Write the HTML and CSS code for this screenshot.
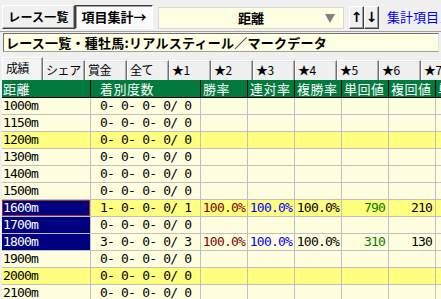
FILE: index.html
```html
<!DOCTYPE html>
<html lang="ja">
<head>
<meta charset="utf-8">
<link rel="stylesheet" href="styles.css">
</head>
<body>
<div class="app">
  <div class="toolbar">
    <div class="btn">レース一覧</div>
    <div class="btn pressed">項目集計→</div>
    <div class="select"><span class="sel-text">距離</span><span class="caret"></span></div>
    <div class="arrows"><div class="abtn">↑</div><div class="abtn">↓</div></div>
    <div class="link">集計項目メモ</div>
  </div>
  <div class="title">レース一覧・種牡馬:リアルスティール／マークデータ</div>
  <div class="tabs">
    <div class="tab active">成績</div>
    <div class="tab">シェア</div>
    <div class="tab">賞金</div>
    <div class="tab">全て</div>
    <div class="tab">★1</div>
    <div class="tab">★2</div>
    <div class="tab">★3</div>
    <div class="tab">★4</div>
    <div class="tab">★5</div>
    <div class="tab">★6</div>
    <div class="tab">★7</div>
  </div>
  <div class="grid">
    <div class="row head">
      <div class="c c1">距離</div>
      <div class="c c2">着別度数</div>
      <div class="c c3">勝率</div>
      <div class="c c3">連対率</div>
      <div class="c c3">複勝率</div>
      <div class="c c3">単回値</div>
      <div class="c c3">複回値</div>
      <div class="c c3">単勝率</div>
    </div>
    <div class="row"><div class="c c1">1000m</div><div class="c c2">0- 0- 0- 0/ 0</div><div class="c c3"></div><div class="c c3"></div><div class="c c3"></div><div class="c c3"></div><div class="c c3"></div><div class="c c3"></div></div>
    <div class="row"><div class="c c1">1150m</div><div class="c c2">0- 0- 0- 0/ 0</div><div class="c c3"></div><div class="c c3"></div><div class="c c3"></div><div class="c c3"></div><div class="c c3"></div><div class="c c3"></div></div>
    <div class="row hl"><div class="c c1">1200m</div><div class="c c2">0- 0- 0- 0/ 0</div><div class="c c3"></div><div class="c c3"></div><div class="c c3"></div><div class="c c3"></div><div class="c c3"></div><div class="c c3"></div></div>
    <div class="row"><div class="c c1">1300m</div><div class="c c2">0- 0- 0- 0/ 0</div><div class="c c3"></div><div class="c c3"></div><div class="c c3"></div><div class="c c3"></div><div class="c c3"></div><div class="c c3"></div></div>
    <div class="row"><div class="c c1">1400m</div><div class="c c2">0- 0- 0- 0/ 0</div><div class="c c3"></div><div class="c c3"></div><div class="c c3"></div><div class="c c3"></div><div class="c c3"></div><div class="c c3"></div></div>
    <div class="row"><div class="c c1">1500m</div><div class="c c2">0- 0- 0- 0/ 0</div><div class="c c3"></div><div class="c c3"></div><div class="c c3"></div><div class="c c3"></div><div class="c c3"></div><div class="c c3"></div></div>
    <div class="row hl"><div class="c c1 sel focus">1600m</div><div class="c c2">1- 0- 0- 0/ 1</div><div class="c c3 num red">100.0%</div><div class="c c3 num blue">100.0%</div><div class="c c3 num">100.0%</div><div class="c c3 num green pr">790</div><div class="c c3 num pr">210</div><div class="c c3"></div></div>
    <div class="row"><div class="c c1 sel">1700m</div><div class="c c2">0- 0- 0- 0/ 0</div><div class="c c3"></div><div class="c c3"></div><div class="c c3"></div><div class="c c3"></div><div class="c c3"></div><div class="c c3"></div></div>
    <div class="row"><div class="c c1 sel">1800m</div><div class="c c2">3- 0- 0- 0/ 3</div><div class="c c3 num red">100.0%</div><div class="c c3 num blue">100.0%</div><div class="c c3 num">100.0%</div><div class="c c3 num green pr">310</div><div class="c c3 num pr">130</div><div class="c c3"></div></div>
    <div class="row"><div class="c c1">1900m</div><div class="c c2">0- 0- 0- 0/ 0</div><div class="c c3"></div><div class="c c3"></div><div class="c c3"></div><div class="c c3"></div><div class="c c3"></div><div class="c c3"></div></div>
    <div class="row hl"><div class="c c1">2000m</div><div class="c c2">0- 0- 0- 0/ 0</div><div class="c c3"></div><div class="c c3"></div><div class="c c3"></div><div class="c c3"></div><div class="c c3"></div><div class="c c3"></div></div>
    <div class="row"><div class="c c1">2100m</div><div class="c c2">0- 0- 0- 0/ 0</div><div class="c c3"></div><div class="c c3"></div><div class="c c3"></div><div class="c c3"></div><div class="c c3"></div><div class="c c3"></div></div>
  </div>
</div>
</body>
</html>
```
FILE: styles.css
```css
* { box-sizing: border-box; }
html, body {
  margin: 0;
  padding: 0;
  width: 441px;
  height: 299px;
  overflow: hidden;
  background: #f0f0f0;
  font-family: "Noto Sans CJK JP", sans-serif;
  color: #000;
}
.app { width: 441px; white-space: nowrap; }

.toolbar {
  display: flex;
  align-items: flex-start;
  height: 32px;
  padding: 5px 0 0 2px;
  border-bottom: 1px solid #a0a0a0;
}
.toolbar > * { flex-shrink: 0; }
.btn {
  width: 73px;
  height: 24px;
  font-size: 12px;
  font-weight: bold;
  letter-spacing: 0.2px;
  line-height: 22px;
  text-align: center;
  background: #f0f0f0;
  border: 1px solid;
  border-color: #ffffff #404040 #404040 #ffffff;
  box-shadow: inset -1px -1px 0 #a0a0a0;
}
.btn.pressed {
  width: 78px;
  font-size: 13px;
  letter-spacing: 0;
  background: #fbfbfb;
  border-color: #404040 #ffffff #ffffff #404040;
  box-shadow: inset 1px 1px 0 #a0a0a0;
}
.select {
  margin: 2px 0 0 5px;
  width: 186px;
  height: 22px;
  background: #ffffe4;
  border: 1px solid #d8d8d0;
  display: flex;
  align-items: center;
  justify-content: center;
  position: relative;
}
.sel-text {
  font-size: 13px;
  font-weight: bold;
  line-height: 20px;
}
.caret {
  position: absolute;
  right: 8px;
  top: 6px;
  width: 0;
  height: 0;
  border-left: 5px solid transparent;
  border-right: 5px solid transparent;
  border-top: 9px solid #808080;
}
.arrows { display: flex; margin: 1px 0 0 5px; }
.abtn {
  width: 15px;
  height: 23px;
  font-family: "DejaVu Sans", sans-serif;
  font-size: 14px;
  font-weight: bold;
  line-height: 20px;
  text-align: center;
  background: #f0f0f0;
  border: 1px solid;
  border-color: #ffffff #404040 #404040 #ffffff;
  box-shadow: inset -1px -1px 0 #a0a0a0;
}
.link {
  margin: 3px 0 0 8px;
  font-size: 13px;
  line-height: 18px;
  color: #0000ff;
}

.title {
  margin: 1px 2px 0 3px;
  height: 19px;
  background: #ffffe4;
  border: 1px solid;
  border-color: #707070 #e0e0e0 #a0a0a0 #707070;
  font-size: 13px;
  font-weight: bold;
  letter-spacing: 0.25px;
  line-height: 17px;
  padding-left: 2px;
}

.tabs {
  display: flex;
  align-items: flex-end;
  margin-top: 5px;
  height: 23px;
  padding-left: 2px;
}
.tab {
  flex: 0 0 42px;
  height: 20px;
  font-size: 12px;
  letter-spacing: -0.4px;
  line-height: 18px;
  padding-left: 2px;
  overflow: hidden;
  background: #f0f0f0;
  border-top: 1px solid #ffffff;
  border-left: 1px solid #ffffff;
  border-right: 1px solid #707070;
  box-shadow: inset -1px 0 0 #b0b0b0, inset 0 1px 0 #e8e8e8;
}
.tab.active {
  flex-basis: 41px;
  height: 23px;
  line-height: 20px;
  padding-left: 3px;
  background: #f4f4f4;
}

.grid { margin-left: 2px; }
.row { display: flex; height: 17px; background: #ffffe0; }
.row.hl { background: #ffff80; }
.c {
  flex: 0 0 auto;
  height: 17px;
  border-right: 1px solid #c0c0c0;
  border-bottom: 1px solid #c0c0c0;
  font-family: "DejaVu Sans Mono", monospace;
  font-size: 13px;
  letter-spacing: -0.8px;
  line-height: 16px;
  white-space: pre;
  overflow: hidden;
}
.c1 { width: 89px; padding-left: 1px; }
.c2 { width: 110px; padding-left: 9px; }
.c3 { width: 47px; }
.num { text-align: right; padding-right: 2px; }
.num.pr { padding-right: 3px; }
.red { color: #800000; }
.blue { color: #0000ff; }
.green { color: #008000; }
.sel { background: #000080; color: #ffffff; }
.focus { box-shadow: inset 0 0 0 1px #a03030; }

.row.head { height: 18px; background: #007a3d; }
.head .c {
  height: 18px;
  color: #ffffff;
  font-family: "Noto Sans CJK JP", sans-serif;
  font-size: 13px;
  letter-spacing: 0.5px;
  line-height: 17px;
  border-right: 1px solid #000000;
  border-bottom: 1px solid #000000;
  padding-left: 2px;
}
.head .c1 { padding-left: 1px; }
.head .c2 { padding-left: 9px; }
```
